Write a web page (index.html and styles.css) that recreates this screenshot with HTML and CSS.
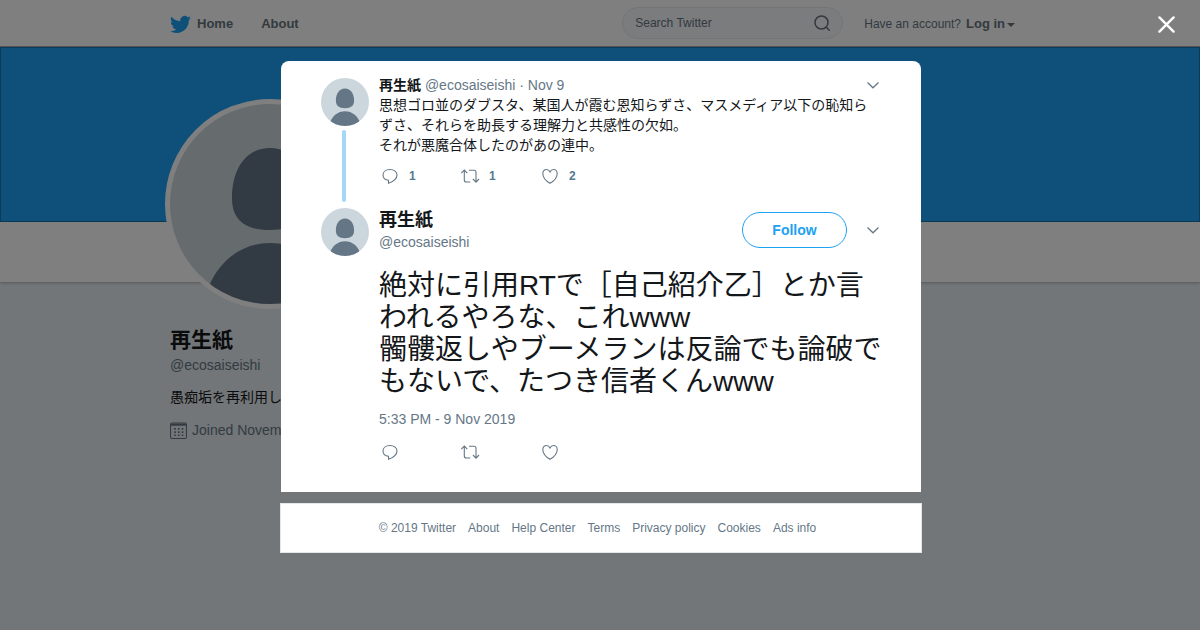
FILE: index.html
```html
<!DOCTYPE html>
<html lang="ja">
<head>
<meta charset="utf-8">
<meta name="viewport" content="width=device-width, initial-scale=1">
<title>再生紙 on Twitter</title>
<link rel="stylesheet" href="styles.css">
</head>
<body>
<svg class="defs" aria-hidden="true">
  <symbol id="person" viewBox="0 0 200 200">
    <rect width="200" height="200" fill="#ccd6dd"/>
    <path fill="#657786" d="M100 44c-24 0-38 21-38 50 0 21 12 32 38 32s38-11 38-32c0-29-14-50-38-50zM36 190c10-31 34-51 64-51s54 20 64 51v10H36z"/>
  </symbol>
  <symbol id="reply" viewBox="0 0 20 20">
    <path d="M10 3.500C5.700 3.500 3 5.900 3 9c0 3.100 2.500 5 5.500 5.200v3c4.600-1.600 8.500-4.300 8.500-8.200C17 5.900 14.200 3.500 10 3.500z"/>
  </symbol>
  <symbol id="retweet" viewBox="0 0 20 20">
    <path d="M1.300 7.200 4.300 4l3 3.200M4.300 4v10q0 2 2 2h4M9 4.300h5q2 0 2 2v9.500M12.900 13l3.100 3.200 3-3.200"/>
  </symbol>
  <symbol id="heart" viewBox="0 0 20 20">
    <path d="M10 6C9.200 4.300 7.900 3.500 6.500 3.500 4.300 3.500 2.800 5.200 2.800 7.500c0 4 3.500 7.700 7.200 9.800 3.700-2.100 7.200-5.800 7.200-9.800 0-2.300-1.500-4-3.700-4C12.100 3.500 10.800 4.300 10 6z"/>
  </symbol>
  <symbol id="chevron" viewBox="0 0 14 14">
    <path d="M1.500 4.500 7 9.800l5.500-5.300"/>
  </symbol>
</svg>

<header class="topbar">
  <div class="container topbar-inner">
    <nav class="main-nav">
      <a class="nav-home" href="#"><svg class="bird" viewBox="0 0 24 24" aria-hidden="true"><path d="M23.954 4.569a10 10 0 0 1-2.825.775 4.958 4.958 0 0 0 2.163-2.723c-.951.555-2.005.959-3.127 1.184a4.920 4.920 0 0 0-8.384 4.482C7.691 8.094 4.066 6.130 1.640 3.161a4.822 4.822 0 0 0-.666 2.475c0 1.710.87 3.213 2.188 4.096a4.904 4.904 0 0 1-2.228-.616v.061a4.923 4.923 0 0 0 3.946 4.827 4.996 4.996 0 0 1-2.212.085 4.937 4.937 0 0 0 4.604 3.417 9.868 9.868 0 0 1-6.102 2.105c-.39 0-.779-.023-1.170-.067a13.995 13.995 0 0 0 7.557 2.209c9.054 0 13.999-7.496 13.999-13.986 0-.209 0-.42-.015-.63a9.936 9.936 0 0 0 2.460-2.548z"/></svg>Home</a>
      <a href="#">About</a>
    </nav>
    <div class="account">
      <form class="search">
        <input class="search-input" type="text" placeholder="Search Twitter" aria-label="Search Twitter">
        <button class="search-button" type="button" aria-label="Search"><svg viewBox="0 0 16 16" aria-hidden="true"><circle cx="7.500" cy="7.500" r="6.500"/><path d="m12.300 12.300 3 3"/></svg></button>
      </form>
      <p class="login">Have an account? <a href="#">Log in<span class="caret"></span></a></p>
    </div>
  </div>
</header>

<div class="banner"></div>
<div class="profile-bar"></div>
<main class="container">
  <aside class="profile">
    <svg class="profile-avatar" aria-hidden="true"><use href="#person"/></svg>
    <h1 class="profile-name">再生紙</h1>
    <p class="profile-handle">@ecosaiseishi</p>
    <p class="profile-bio">愚痴垢を再利用しました</p>
    <p class="profile-joined"><svg class="calendar" viewBox="0 0 16 16" aria-hidden="true"><rect x="0.500" y="1" width="15" height="14.500" rx="1.500"/><path d="M1 2.500h14" stroke-width="2"/><path d="M4 6.500h9M4 9.500h9M4 12.500h9" stroke-width="1.500" stroke-dasharray="1.500 2"/></svg>Joined November 2019</p>
  </aside>
</main>

<div class="overlay">
  <button class="close" type="button" aria-label="Close"><svg viewBox="0 0 18 18" aria-hidden="true"><path d="m1.500 1.500 15 15m0-15-15 15"/></svg></button>
  <div class="dialog-column">
    <section class="dialog" role="dialog" aria-label="Tweet">
      <article class="tweet">
        <div class="rail">
          <svg class="avatar" aria-hidden="true"><use href="#person"/></svg>
          <span class="thread-line"></span>
        </div>
        <div class="tweet-body">
          <header class="tweet-head">
            <p><b>再生紙</b> <span class="muted">@ecosaiseishi · Nov 9</span></p>
            <button class="more" type="button" aria-label="More"><svg><use href="#chevron"/></svg></button>
          </header>
          <p class="tweet-text">思想ゴロ並のダブスタ、某国人が霞む恩知らずさ、マスメディア以下の恥知らずさ、それらを助長する理解力と共感性の欠如。<br>それが悪魔合体したのがあの連中。</p>
          <div class="actions">
            <button type="button" aria-label="Reply"><svg><use href="#reply"/></svg>1</button>
            <button type="button" aria-label="Retweet"><svg><use href="#retweet"/></svg>1</button>
            <button type="button" aria-label="Like"><svg><use href="#heart"/></svg>2</button>
          </div>
        </div>
      </article>
      <article class="main-tweet">
        <header class="author">
          <svg class="avatar" aria-hidden="true"><use href="#person"/></svg>
          <div class="author-info">
            <div class="author-names">
              <h2>再生紙</h2>
              <p class="muted">@ecosaiseishi</p>
            </div>
            <button class="follow" type="button">Follow</button>
            <button class="more" type="button" aria-label="More"><svg><use href="#chevron"/></svg></button>
          </div>
        </header>
        <div class="main-body">
          <p class="main-text">絶対に引用RTで［自己紹介乙］とか言われるやろな、これwww<br>髑髏返しやブーメランは反論でも論破でもないで、たつき信者くんwww</p>
          <p class="date muted">5:33 PM - 9 Nov 2019</p>
          <div class="actions">
            <button type="button" aria-label="Reply"><svg><use href="#reply"/></svg></button>
            <button type="button" aria-label="Retweet"><svg><use href="#retweet"/></svg></button>
            <button type="button" aria-label="Like"><svg><use href="#heart"/></svg></button>
          </div>
        </div>
      </article>
    </section>
    <footer class="legal">
      <span>© 2019 Twitter</span>
      <a href="#">About</a>
      <a href="#">Help Center</a>
      <a href="#">Terms</a>
      <a href="#">Privacy policy</a>
      <a href="#">Cookies</a>
      <a href="#">Ads info</a>
    </footer>
  </div>
</div>
</body>
</html>
```

FILE: styles.css
```css
* { box-sizing: border-box; }

body {
  margin: 0;
  min-height: 100vh;
  background: #e6ecf0;
  color: #14171a;
  font: 14px/20px "Liberation Sans", "Noto Sans CJK JP", sans-serif;
}

h1, h2, p { margin: 0; }
a { color: inherit; text-decoration: none; }
button { padding: 0; border: 0; background: none; color: inherit; font: inherit; cursor: pointer; }
.defs { position: absolute; width: 0; height: 0; }
.muted { color: #657786; }

.container { max-width: 860px; margin: 0 auto; }

/* Top bar */
.topbar { background: #fff; border-bottom: 1px solid #a6a6a6; }
.topbar-inner { display: flex; justify-content: space-between; align-items: center; height: 46px; padding-right: 15px; }
.main-nav { display: flex; gap: 28px; color: #66757f; font-size: 13px; font-weight: bold; padding-top: 2px; }
.nav-home { display: flex; align-items: center; gap: 6px; }
.bird { width: 21px; height: 21px; fill: #1da1f2; }
.account { display: flex; align-items: center; gap: 21px; }
.search { display: flex; align-items: center; width: 221px; height: 32px; padding: 0 12px; border: 1px solid #e6ecf0; border-radius: 16px; background: #f5f8fa; }
.search-input { flex: 1; min-width: 0; padding: 0; border: 0; outline: 0; background: none; font: 12px/16px "Liberation Sans", sans-serif; }
.search-input::placeholder { color: #66757f; opacity: 1; }
.search-button svg { display: block; width: 16px; height: 16px; fill: none; stroke: #66757f; stroke-width: 1.500; stroke-linecap: round; }
.login { display: flex; gap: 5px; padding-top: 2px; color: #66757f; font-size: 12px; }
.login a { font-size: 13px; font-weight: bold; }
.caret { display: inline-block; margin-left: 2px; border: 4px solid transparent; border-top-color: currentColor; border-bottom: 0; vertical-align: middle; }

/* Profile page */
.banner { height: 175px; background: #1da1f2; box-shadow: inset 0 0 0 1px rgba(0, 0, 0, 0.25); }
.profile-bar { height: 60px; background: #fff; box-shadow: 0 1px 3px rgba(0, 0, 0, 0.25); }
.profile { width: 290px; margin-top: -183px; }
.profile-avatar { position: relative; display: block; width: 210px; height: 210px; margin-left: -5px; border: 5px solid #fff; border-radius: 50%; background: #fff; }
.profile-name { margin-top: 16px; font-size: 21px; line-height: 30px; }
.profile-handle { color: #657786; }
.profile-bio { margin-top: 12px; }
.profile-joined { display: flex; align-items: center; gap: 5px; margin-top: 13px; color: #657786; }
.calendar { width: 17px; height: 17px; fill: none; stroke: #657786; }

/* Tweet overlay */
.overlay { position: fixed; inset: 0; display: flex; justify-content: center; align-items: flex-start; padding: 61px 0 20px 2px; overflow: auto; background: rgba(0, 0, 0, 0.5); }
.close { position: absolute; top: 16px; right: 25px; }
.close svg { display: block; width: 17px; height: 17px; fill: none; stroke: #fff; stroke-width: 2.500; stroke-linecap: round; }
.dialog-column { display: flex; flex-direction: column; gap: 11px; width: 100%; max-width: 642px; }
.dialog { margin: 0 1px; padding: 14px 40px 30px; border-radius: 8px 8px 0 0; background: #fff; }
.avatar { flex: none; display: block; width: 48px; height: 48px; border-radius: 50%; }

.tweet { display: flex; gap: 10px; }
.rail { display: flex; flex-direction: column; align-items: center; gap: 4px; padding: 3px 0 6px; }
.thread-line { width: 4px; margin-right: 2px; flex: 1; border-radius: 2px; background: #a5d8f8; }
.tweet-body { flex: 1; min-width: 0; padding-bottom: 22px; }
.tweet-head { display: flex; justify-content: space-between; align-items: center; }
.tweet-text { padding-right: 10px; }
.more { margin-right: 1px; }
.more svg { display: block; width: 14px; height: 14px; fill: none; stroke: #657786; stroke-width: 1.200; }

.actions { display: flex; margin: 11px 0 0 1px; color: #557a92; }
.actions button { display: flex; align-items: center; gap: 9px; width: 80px; height: 20px; font-size: 12px; font-weight: bold; }
.actions svg { width: 20px; height: 20px; fill: none; stroke: #657786; stroke-width: 1.100; }

.author { display: flex; gap: 10px; }
.author-info { flex: 1; display: flex; align-items: center; height: 44px; }
.author-names { flex: 1; }
.author-names h2 { font-size: 18px; line-height: 24px; }
.follow { width: 105px; height: 36px; margin-right: 19px; border: 1px solid #1da1f2; border-radius: 18px; color: #1da1f2; font-weight: bold; }
.main-body { margin-left: 58px; }
.main-text { margin: 14px -3px 0 0; font-size: 28px; line-height: 32px; }
.date { margin-top: 11px; }
.main-body .actions { margin-top: 13px; }

/* Legal links */
.legal { display: flex; flex-wrap: wrap; justify-content: center; gap: 0 12px; padding: 15px 9px 15px 2px; border: 1px solid #e1e8ed; background: #fff; color: #657786; font-size: 12px; line-height: 18px; }
```
